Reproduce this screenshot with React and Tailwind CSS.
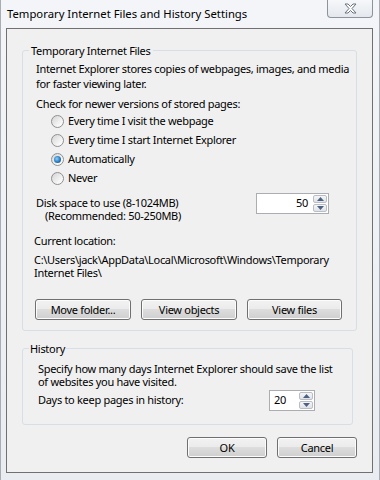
import React from 'react';

// ─── Win7 bits ─────────────────────────────────────────────────────────────
const Radio = ({ checked, label }) => (
  <div className="flex items-center h-[19px]">
    <span className="w-[13px] h-[13px] rounded-full border border-[#8f8f8f] bg-[linear-gradient(135deg,#d4d4d4,#f6f6f6_70%,#ffffff)] flex items-center justify-center">
      {checked && (
        <span className="w-[7px] h-[7px] rounded-full bg-[radial-gradient(circle_at_40%_40%,#8fd0ff,#1f72b8_60%,#124c80)]" />
      )}
    </span>
    <span className="ml-[4px]">{label}</span>
  </div>
);

const Arrow = ({ up }) => (
  <svg width="7" height="4" viewBox="0 0 7 4">
    <path d={up ? 'M0 4 L3.5 0 L7 4 Z' : 'M0 0 L3.5 4 L7 0 Z'} fill="#4d6185" />
  </svg>
);

const Spinner = ({ value, left, className }) => (
  <div className={`flex h-[21px] border border-[#abadb3] bg-white ${className}`}>
    <div className={`flex-1 flex items-center ${left ? 'justify-start pl-[4px]' : 'justify-end pr-[5px]'}`}>{value}</div>
    <div className="flex flex-col w-[15px] py-[1px] pr-[1px] gap-[1px]">
      <div className="flex-1 flex items-center justify-center border border-[#b9bec6] rounded-[2px] bg-[linear-gradient(#f6f6f6,#dfe2e6)]">
        <Arrow up />
      </div>
      <div className="flex-1 flex items-center justify-center border border-[#b9bec6] rounded-[2px] bg-[linear-gradient(#f6f6f6,#dfe2e6)]">
        <Arrow />
      </div>
    </div>
  </div>
);

const Button = ({ children, className }) => (
  <button className={`h-[21px] border border-[#707070] rounded-[3px] shadow-[inset_0_0_0_1px_#fcfcfc] bg-[linear-gradient(#f2f2f2_0%,#ebebeb_49%,#dddddd_50%,#cfcfcf_100%)] text-black leading-none ${className}`}>
    {children}
  </button>
);

const App = () => {
  return (
    <div className="w-[380px] h-[480px] overflow-hidden bg-[linear-gradient(#f3f5f8,#e9edf2)] border-l border-r border-[#a9adb3] font-['Noto_Sans',sans-serif] text-[11px] text-black flex flex-col">

      {/* Title bar */}
      <div className="h-[28px] flex items-start justify-between shrink-0">
        <span className="pl-[6px] pt-[6px] leading-[15px] text-[11.3px] whitespace-nowrap">Temporary Internet Files and History Settings</span>
        <div className="mr-[6px] mt-[-1px] w-[46px] h-[19px] border border-[#8d939b] border-t-0 rounded-b-[4px] bg-[linear-gradient(#f7f8fa,#e4e8ee)] flex items-center justify-center">
          <svg width="13" height="11" viewBox="0 0 13 11">
            <path d="M1 1 L4 1 L6.5 3.5 L9 1 L12 1 L8 5.5 L12 10 L9 10 L6.5 7.5 L4 10 L1 10 L5 5.5 Z" fill="#ffffff" stroke="#6a7380" strokeWidth="1" strokeLinejoin="round" />
          </svg>
        </div>
      </div>

      {/* Client area */}
      <div className="ml-[5px] mr-[6px] h-[445px] border border-[#707070] bg-[#f0f0f0] pl-[15px] pr-[15px] tracking-[-0.3px] whitespace-nowrap">

        {/* Temporary Internet Files */}
        <fieldset className="mt-[14px] w-[335px] border border-[#d5dfe5] rounded-[3px] pb-[10px]">
          <legend className="ml-[6px] px-[2px] leading-[15px]">Temporary Internet Files</legend>

          <div className="pl-[13px] pt-[3px] leading-[15px]">
            Internet Explorer stores copies of webpages, images, and media<br />
            for faster viewing later.
          </div>

          <div className="pl-[13px] mt-[5px] leading-[15px]">Check for newer versions of stored pages:</div>

          <div className="pl-[28px] mt-[1px] flex flex-col">
            <Radio label="Every time I visit the webpage" />
            <Radio label="Every time I start Internet Explorer" />
            <Radio checked label="Automatically" />
            <Radio label="Never" />
          </div>

          <div className="flex items-start mt-[5px] pl-[13px] pr-[27px]">
            <div className="pt-[3px] leading-[13px]">
              <div>Disk space to use (8-1024MB)</div>
              <div className="pl-[9px]">(Recommended: 50-250MB)</div>
            </div>
            <Spinner value="50" className="ml-auto w-[73px]" />
          </div>

          <div className="pl-[11px] mt-[11px] leading-[15px]">Current location:</div>
          <div className="pl-[11px] mt-[5px] leading-[13px]">
            C:\Users\jack\AppData\Local\Microsoft\Windows\Temporary<br />
            Internet Files\
          </div>

          <div className="flex gap-[10px] pl-[12px] mt-[20px]">
            <Button className="w-[96px]">Move folder...</Button>
            <Button className="w-[96px]">View objects</Button>
            <Button className="w-[95px]">View files</Button>
          </div>
        </fieldset>

        {/* History */}
        <fieldset className="mt-[10px] w-[331px] border border-[#d5dfe5] rounded-[3px] pb-[13px]">
          <legend className="ml-[6px] px-[1px] leading-[15px]">History</legend>
          <div className="pl-[15px] pt-[6px] leading-[13px]">
            Specify how many days Internet Explorer should save the list<br />
            of websites you have visited.
          </div>
          <div className="flex items-center h-[21px] mt-[2px] pl-[15px] pr-[37px]">
            <span>Days to keep pages in history:</span>
            <Spinner value="20" left className="ml-auto w-[46px]" />
          </div>
        </fieldset>

        {/* Dialog buttons */}
        <div className="flex justify-end gap-[10px] mt-[12px]">
          <Button className="w-[80px]">OK</Button>
          <Button className="w-[80px]">Cancel</Button>
        </div>
      </div>
    </div>
  );
};

export default App;
